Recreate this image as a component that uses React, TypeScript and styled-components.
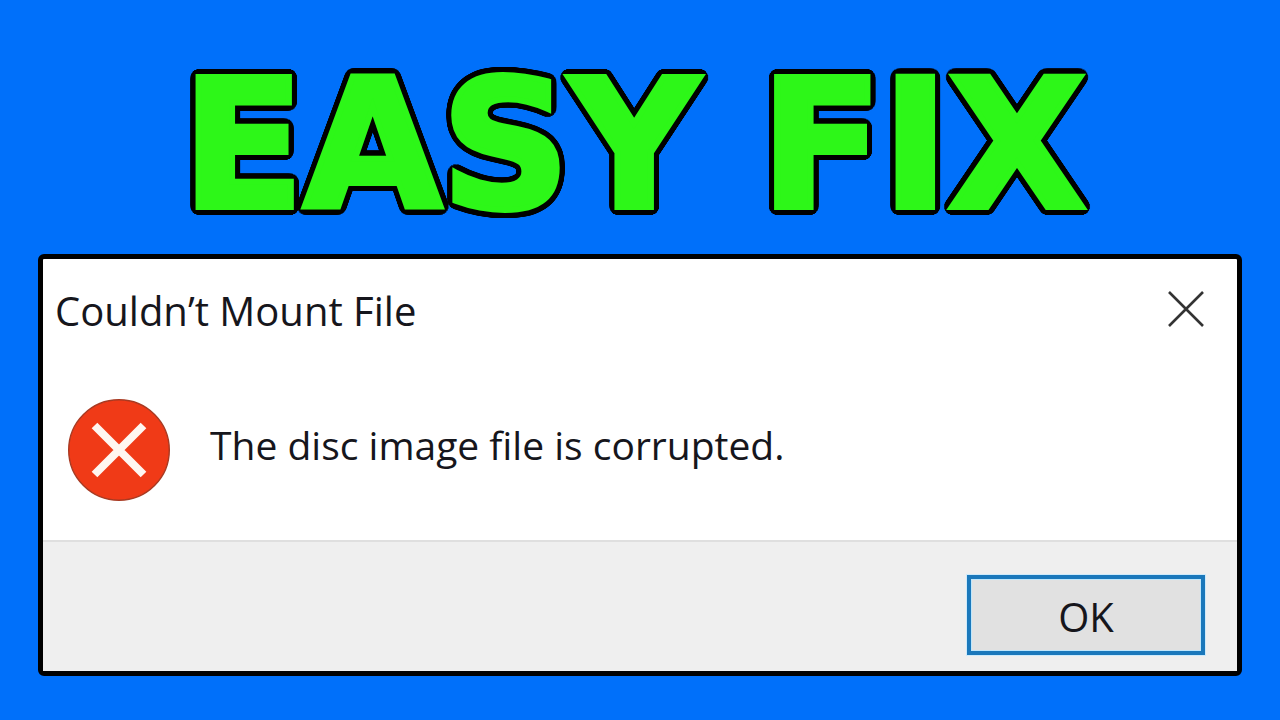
import React from "react";
import styled, { createGlobalStyle } from "styled-components";

const OUTLINE_RADIUS = 8;
const OUTLINE_STEPS = 64;

// Rounded outline built from a ring of hard shadows around the letters.
// The green stroke thickens each letter by 3px, so 5px of black stays visible.
const outline = Array.from({ length: OUTLINE_STEPS }, (_, i) => {
  const angle = (i / OUTLINE_STEPS) * Math.PI * 2;
  const x = (Math.cos(angle) * OUTLINE_RADIUS).toFixed(2);
  const y = (Math.sin(angle) * OUTLINE_RADIUS).toFixed(2);
  return `${x}px ${y}px 0 #000`;
}).join(", ");

const GlobalStyle = createGlobalStyle`
  *, *::before, *::after {
    box-sizing: border-box;
  }
  body {
    margin: 0;
    background: #0070fa;
    font-family: "Open Sans", "Noto Sans", sans-serif;
  }
`;

const Page = styled.main`
  display: flex;
  flex-direction: column;
  min-height: 100vh;
  padding: 46px 38px 44px;
`;

const Headline = styled.h1`
  margin: 0 0 8px;
  padding-right: 12px;
  color: #2df718;
  font-family: "DejaVu Sans", sans-serif;
  font-size: 178px;
  font-weight: 700;
  line-height: 200px;
  text-align: center;
  white-space: nowrap;
  -webkit-text-stroke: 6px #2df718;
  text-shadow: ${outline};
`;

const Dialog = styled.section`
  display: flex;
  flex-direction: column;
  border: 5px solid #000;
  border-radius: 6px;
  background: #fff;
  color: #16161c;
`;

const TitleBar = styled.header`
  display: flex;
  align-items: center;
  justify-content: space-between;
  height: 100px;
  padding: 0 32px 0 12px;
`;

const Title = styled.h2`
  margin: 0;
  padding-top: 4px;
  font-size: 40px;
  font-weight: 400;
  line-height: 56px;
`;

const CloseButton = styled.button`
  display: flex;
  padding: 0;
  border: 0;
  background: none;
  color: #333;
  cursor: pointer;
`;

const Content = styled.div`
  display: flex;
  align-items: center;
  gap: 39px;
  height: 181px;
  padding: 0 24px;
`;

const Message = styled.p`
  margin: 0;
  padding-bottom: 10px;
  font-size: 39px;
  line-height: 56px;
`;

const Footer = styled.footer`
  display: flex;
  justify-content: flex-end;
  padding: 33px 32px 16px;
  border-top: 2px solid #dfdfdf;
  background: #efefef;
`;

const OkButton = styled.button`
  width: 238px;
  height: 80px;
  padding: 4px 0 0;
  border: 4px solid #1a78bb;
  background: #e1e1e1;
  box-shadow: 0 0 0 1px #cdeafb, inset 0 0 0 1px #bfe6fb;
  color: #16161c;
  font-family: inherit;
  font-size: 40px;
  line-height: 56px;
  cursor: pointer;
`;

const CloseIcon = () => (
  <svg width="38" height="38" viewBox="0 0 38 38" aria-hidden="true">
    <path d="M2 2 36 36M36 2 2 36" fill="none" stroke="currentColor" strokeWidth="2.6" />
  </svg>
);

const ErrorIcon = () => (
  <svg width="104" height="104" viewBox="0 0 104 104" aria-hidden="true">
    <circle cx="52" cy="52" r="50.3" fill="#f03a17" stroke="#a83a22" strokeWidth="1.4" />
    <path d="M27.5 27.5 76.5 76.5M76.5 27.5 27.5 76.5" fill="none" stroke="#fff6f0" strokeWidth="8" />
  </svg>
);

export default function App() {
  return (
    <>
      <GlobalStyle />
      <Page>
        <Headline>EASY FIX</Headline>
        <Dialog role="alertdialog" aria-labelledby="dialog-title" aria-describedby="dialog-message">
          <TitleBar>
            <Title id="dialog-title">Couldn’t Mount File</Title>
            <CloseButton type="button" aria-label="Close">
              <CloseIcon />
            </CloseButton>
          </TitleBar>
          <Content>
            <ErrorIcon />
            <Message id="dialog-message">The disc image file is corrupted.</Message>
          </Content>
          <Footer>
            <OkButton type="button">OK</OkButton>
          </Footer>
        </Dialog>
      </Page>
    </>
  );
}
